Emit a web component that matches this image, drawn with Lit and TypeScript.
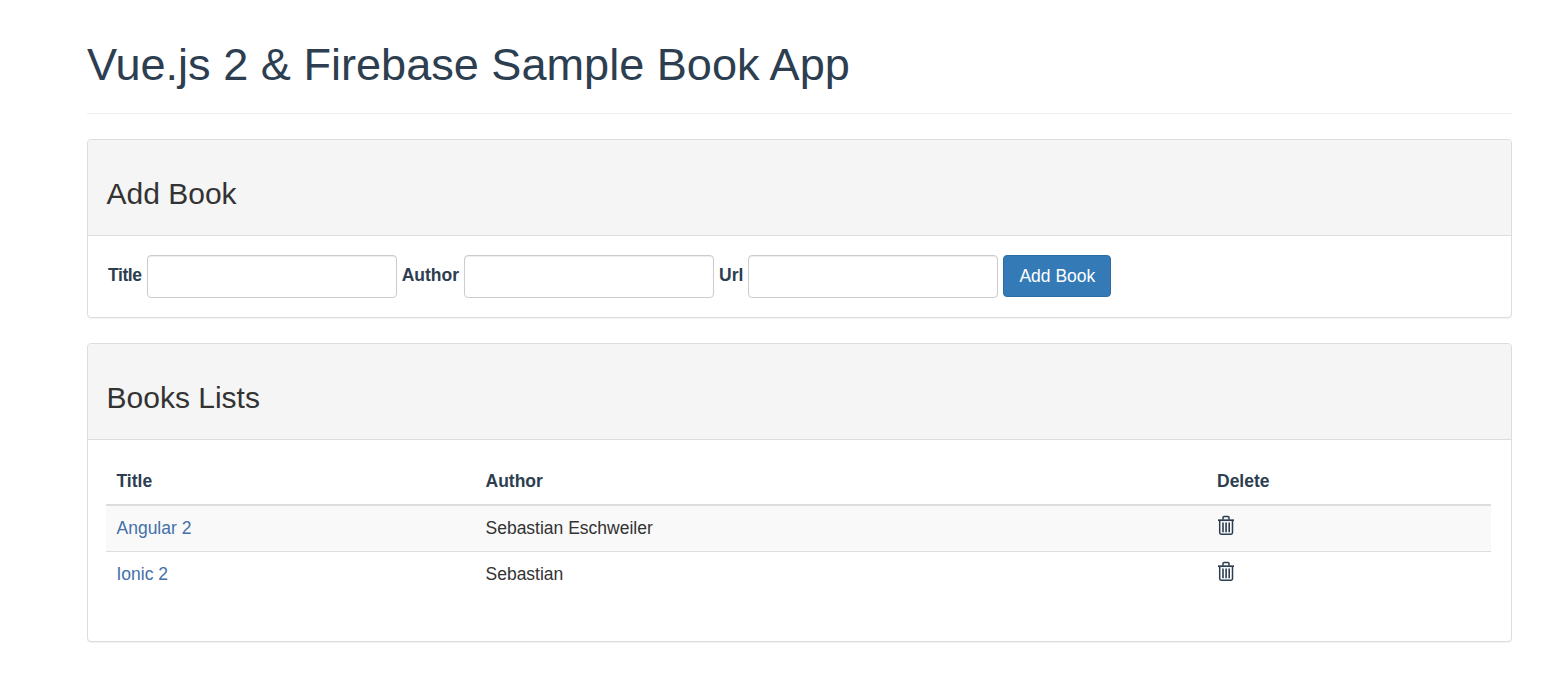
import { LitElement, html, css, svg } from "lit";
import { customElement } from "lit/decorators.js";

const trash = svg`<svg class="trash" width="18" height="20" viewBox="0 0 18 20" fill="none" stroke="#2c3e50" stroke-width="1.5">
<path d="M1 5.2h16" stroke-width="1.7"/><path d="M6 4.8V2.6q0-1 1-1h4q1 0 1 1v2.2"/>
<path d="M2.7 5.5v12.3q0 1.4 1.4 1.4h10q1.4 0 1.4-1.4V5.5"/>
<path d="M6 7.5v9.8M9.1 7.5v9.8M12.2 7.5v9.8" stroke-width="1.6"/></svg>`;

@customElement("app-root")
export class AppRoot extends LitElement {
  static styles = css`
    :host { display: block; font-family: "Liberation Sans", Arial, sans-serif; font-size: 17.5px; line-height: 23px; color: #2c3e50; box-sizing: border-box; padding: 0 56px 50px 87px; }
    * { box-sizing: border-box; }
    .page-header { height: 114px; padding-top: 40px; border-bottom: 1px solid #eee; margin-bottom: 25px; }
    h1 { margin: 0; font-size: 45.1px; line-height: 50px; font-weight: 400; }
    .panel { border: 1px solid #ddd; border-radius: 4px; background: #fff; box-shadow: 0 1px 1px rgba(0,0,0,.05); margin-bottom: 25px; }
    .heading { height: 96px; background: #f5f5f5; border-bottom: 1px solid #ddd; border-radius: 3px 3px 0 0; padding: 0 18.5px; display: flex; align-items: flex-end; color: #333; }
    h3 { margin: 0 0 25px; font-size: 30px; line-height: 33px; font-weight: 400; }
    .form { height: 81px; padding: 19px 20px; display: flex; align-items: flex-start; gap: 5px; }
    label { font-weight: 700; line-height: 40px; }
    label:first-child { letter-spacing: -0.4px; }
    input { width: 250px; height: 43px; border: 1px solid #ccc; border-radius: 4px; background: #fff; box-shadow: inset 0 1px 1px rgba(0,0,0,.075); padding: 6px 12px; font: inherit; }
    button { height: 42px; width: 108px; border: 1px solid #2e6da4; border-radius: 4px; background: #337ab7; color: #fff; font: inherit; padding: 0; }
    .list { padding: 19px 20px 43px 18px; }
    table { width: 100%; table-layout: fixed; border-collapse: collapse; }
    th { text-align: left; padding: 10px 10.5px 11px; height: 46px; border-bottom: 2px solid #ddd; font-weight: 700; }
    td { padding: 11px 10.5px; height: 46px; border-top: 1px solid #ddd; color: #333; vertical-align: top; }
    td:last-child { padding-left: 11px; padding-top: 9px; }
    th:last-child { padding-left: 11px; }
    tbody tr:first-child td { border-top: 0; }
    tbody tr:nth-child(odd) td { background: #f9f9f9; }
    a { color: #4370a8; text-decoration: none; }
    .trash { display: block; }
    .c1 { width: 369px; } .c2 { width: 731px; }
  `;

  render() {
    const books = [["Angular 2", "Sebastian Eschweiler"], ["Ionic 2", "Sebastian"]];
    return html`
      <div class="page-header"><h1>Vue.js 2 &amp; Firebase Sample Book App</h1></div>
      <section class="panel">
        <div class="heading"><h3>Add Book</h3></div>
        <div class="form">
          <label>Title</label><input type="text" />
          <label>Author</label><input type="text" />
          <label>Url</label><input type="text" />
          <button>Add Book</button>
        </div>
      </section>
      <section class="panel">
        <div class="heading"><h3>Books Lists</h3></div>
        <div class="list">
          <table>
            <thead><tr><th class="c1">Title</th><th class="c2">Author</th><th>Delete</th></tr></thead>
            <tbody>
              ${books.map(([t, a]) => html`<tr><td><a href="#">${t}</a></td><td>${a}</td><td>${trash}</td></tr>`)}
            </tbody>
          </table>
        </div>
      </section>
    `;
  }
}
